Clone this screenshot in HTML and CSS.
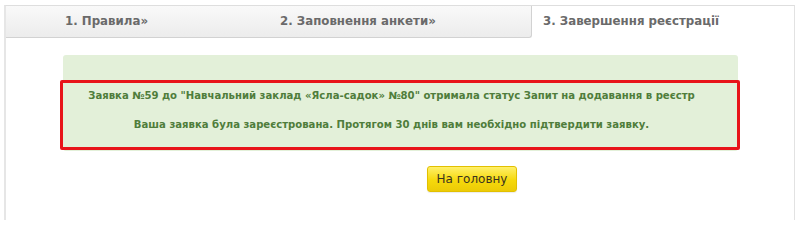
FILE: index.html
```html
<!DOCTYPE html>
<html lang="uk">
<head>
<meta charset="utf-8">
<link rel="stylesheet" href="styles.css">
</head>
<body>
<div class="page">
  <div class="tabs">
    <div class="tab tab-first">1. Правила»</div>
    <div class="tab tab-second">2. Заповнення анкети»</div>
    <div class="tab tab-active">3. Завершення реєстрації</div>
  </div>
  <div class="content">
    <div class="notice">
      <p class="line">Заявка №59 до "Навчальний заклад «Ясла-садок» №80" отримала статус Запит на додавання в реєстр</p>
      <p class="line">Ваша заявка була зареєстрована. Протягом 30 днів вам необхідно підтвердити заявку.</p>
      <div class="highlight"></div>
    </div>
    <div class="actions">
      <button class="btn">На головну</button>
    </div>
  </div>
</div>
</body>
</html>
```
FILE: styles.css
```css
html, body {
  margin: 0;
  padding: 0;
  background: #ffffff;
  height: 220px;
  overflow: hidden;
}
body {
  font-family: "DejaVu Sans", Verdana, sans-serif;
}
.page {
  box-sizing: border-box;
  margin: 5px 5px 0 4px;
  border-top: 1px solid #dedede;
  border-left: 2px solid #e6e6e6;
  border-right: 1px solid #e2e2e2;
  height: 215px;
  background: #fff;
}
.tabs {
  display: flex;
  height: 32px;
}
.tab {
  box-sizing: border-box;
  height: 32px;
  line-height: 30px;
  font-size: 11.8px;
  font-weight: bold;
  color: #6a6a6a;
  white-space: nowrap;
}
.tab-first, .tab-second {
  background: linear-gradient(#f9f9f9, #ececec);
  border-bottom: 1px solid #d2d2d2;
}
.tab-first {
  width: 264px;
  padding-left: 59px;
}
.tab-second {
  width: 262px;
  padding-left: 10px;
  border-right: 1px solid #d2d2d2;
  border-bottom-right-radius: 3px;
}
.tab-active {
  flex: 1;
  padding-left: 11px;
  background: #fff;
}
.content {
  padding: 17px 0 0 0;
}
.notice {
  position: relative;
  margin: 0 56px 0 57px;
  background: #e3f0d9;
  border-radius: 3px;
  padding: 26px 18px 12px 0;
  text-align: center;
}
.line {
  margin: 0;
  height: 29px;
  line-height: 29px;
  font-size: 10.1px;
  font-weight: bold;
  color: #4f7d3b;
  white-space: nowrap;
}
.highlight {
  position: absolute;
  left: -3px;
  right: -2px;
  top: 25px;
  bottom: 1px;
  border: 3px solid #e8141a;
  border-radius: 2px;
}
.actions {
  display: flex;
  justify-content: center;
  padding: 15px 0 0 144px;
}
.btn {
  width: 90px;
  height: 26px;
  padding: 0;
  font-family: "DejaVu Sans", Verdana, sans-serif;
  font-size: 12px;
  color: #3b3320;
  background: linear-gradient(#fff06a, #f6d90c 55%, #eccb06);
  border: 1px solid #e2c000;
  border-radius: 3px;
  box-shadow: 0 1px 1px rgba(0,0,0,0.08);
}
```
